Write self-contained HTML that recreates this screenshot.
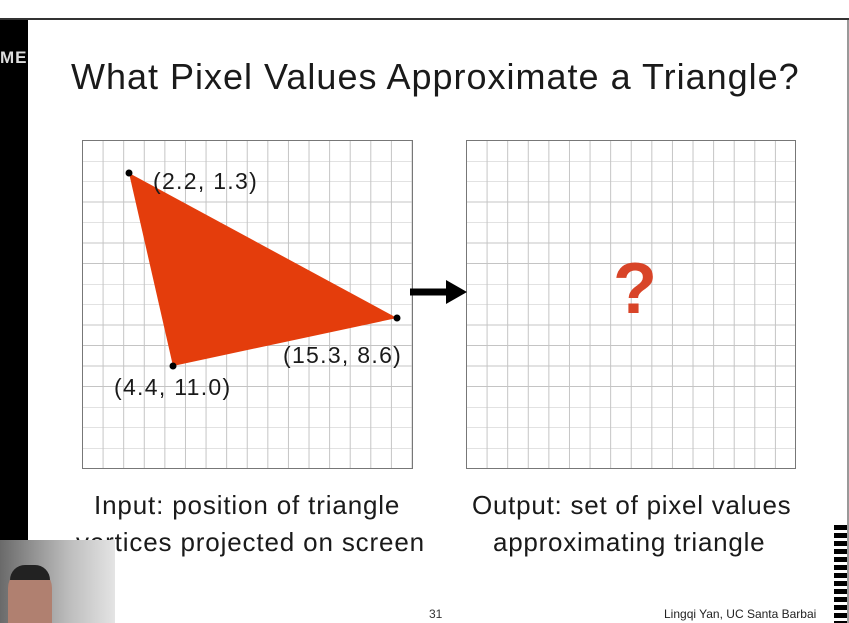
<!DOCTYPE html>
<html><head><style>
body{margin:0;width:849px;height:623px;overflow:hidden;background:#fff;position:relative;font-family:"Liberation Sans",sans-serif}
.a{position:absolute}
.t{font-family:"Liberation Sans",sans-serif;color:#1a1a1a;white-space:nowrap}
.grid{position:absolute;border:1px solid #777;box-sizing:border-box;background-image:linear-gradient(90deg,#c4c4c4 1px,transparent 1px),linear-gradient(#c4c4c4 1px,transparent 1px);background-size:20.6px 20.5px;background-position:-1px -1px}
.lb{font-size:23px;letter-spacing:1.3px}
.bt{font-size:26px;letter-spacing:0.85px}
</style></head><body>
<div class="a" style="left:0;top:18px;width:849px;height:2px;background:#333"></div>
<div class="a" style="left:0;top:20px;width:28px;height:522px;background:#000"></div>
<div class="a" style="left:847px;top:20px;width:2px;height:603px;background:#999"></div>
<div class="a" style="left:0;top:48px;font:bold 17px 'Liberation Sans';color:#ddd;letter-spacing:1px">ME</div>
<div class="a t" style="left:71px;top:56px;font-size:36px;letter-spacing:1px">What Pixel Values Approximate a Triangle?</div>
<div class="grid" style="left:82px;top:140px;width:331px;height:329px"></div>
<div class="grid" style="left:466px;top:140px;width:330px;height:329px"></div>
<svg class="a" style="left:0;top:0" width="849" height="623">
<polygon points="129,173 397,318 173,366" fill="#e43d0c"/>
<circle cx="129" cy="173" r="3.5"/><circle cx="397" cy="318" r="3.5"/><circle cx="173" cy="366" r="3.5"/>
<path d="M410 292H450" stroke="#000" stroke-width="7"/><path d="M446 280L467 292L446 304Z"/>
</svg>
<div class="a t lb" style="left:153px;top:168px">(2.2, 1.3)</div>
<div class="a t lb" style="left:283px;top:342px">(15.3, 8.6)</div>
<div class="a t lb" style="left:114px;top:374px">(4.4, 11.0)</div>
<div class="a" style="left:613px;top:248px;font:bold 72px 'Liberation Sans';color:#d84428">?</div>
<div class="a t bt" style="left:94px;top:490px">Input: position of triangle</div>
<div class="a t bt" style="left:76px;top:527px">vertices projected on screen</div>
<div class="a t bt" style="left:472px;top:490px;letter-spacing:0.75px">Output: set of pixel values</div>
<div class="a t bt" style="left:493px;top:527px;letter-spacing:0.75px">approximating triangle</div>
<div class="a" style="left:429px;top:607px;font-size:12px;color:#333">31</div>
<div class="a" style="left:664px;top:607px;font-size:12px;color:#222">Lingqi Yan, UC Santa Barbai</div>
<div class="a" style="left:0;top:540px;width:115px;height:83px;background:linear-gradient(90deg,#6a6a6a,#bdbdbd 60%,#e4e4e4)"></div>
<div class="a" style="left:8px;top:568px;width:44px;height:55px;border-radius:20px 20px 0 0;background:#b08070"></div>
<div class="a" style="left:10px;top:565px;width:40px;height:15px;border-radius:20px 20px 0 0;background:#222"></div>
<div class="a" style="left:834px;top:525px;width:13px;height:98px;background:repeating-linear-gradient(#000 0 5px,#fff 5px 8px)"></div>
</body></html>
